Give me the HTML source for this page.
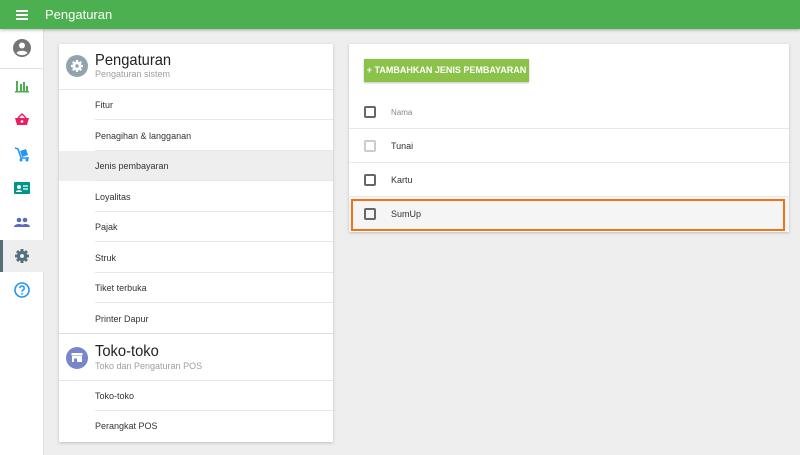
<!DOCTYPE html>
<html><head><meta charset="utf-8"><style>
*{box-sizing:border-box;margin:0;padding:0}
body{width:800px;height:455px;overflow:hidden;background:#eeeeee;font-family:"Liberation Sans",sans-serif;position:relative;color:#333}
.top{position:absolute;left:0;top:0;width:800px;height:29px;background:#4caf50;color:#fff;box-shadow:0 1px 3px rgba(0,0,0,.3);z-index:2}
.top .t{position:absolute;left:45px;top:7px;font-size:13px}
.top .m{position:absolute;left:16px;top:10px;width:12px;height:2px;background:#fff;box-shadow:0 4px 0 #fff,0 8px 0 #fff}
.side{position:absolute;left:0;top:29px;width:44px;height:426px;background:#fff;border-right:1px solid #e0e0e0}
.ic{position:absolute;left:12px;width:20px;height:20px}
.card{position:absolute;background:#fff;box-shadow:0 1px 3px rgba(0,0,0,.2)}
.it{position:absolute;left:36px;right:0;height:30px;font-size:9px;line-height:30px;border-bottom:1px solid #e8e8e8;color:#333}
.row{position:absolute;left:0;right:0;height:34px;border-bottom:1px solid #e8e8e8;font-size:9px;line-height:35px}
.cb{position:absolute;left:15px;top:11px;width:12px;height:12px;border:2px solid #666;border-radius:2px}
.row .l{position:absolute;left:42px;top:0}
.h{position:absolute;left:36px;font-size:16px;color:#222;transform:scaleX(.92);transform-origin:left}
.s{position:absolute;left:36px;font-size:9px;color:#9e9e9e}
</style></head><body>
<div class="top"><div class="m"></div><div class="t">Pengaturan</div></div>
<div class="side">
 <div style="position:absolute;left:0;top:39px;width:44px;height:1px;background:#e0e0e0"></div>
 <svg class="ic" style="top:9px" viewBox="0 0 20 20"><circle cx="10" cy="10" r="9" fill="#757575"/><circle cx="10" cy="7.5" r="3" fill="#fff"/><path d="M4.5 15c1.5-3 9.5-3 11 0a8 8 0 0 1-11 0z" fill="#fff"/></svg>
 <svg class="ic" style="top:47px" viewBox="0 0 20 20"><path d="M4 5h2v10H4zM8 8h2v7H8zM11 6h2v9h-2zM14 10h2v5h-2zM3 15h14v1.5H3z" fill="#4caf50"/></svg>
 <svg class="ic" style="top:81px" viewBox="0 0 20 20"><path d="M3 8h14l-2 7H5z" fill="#e91e63"/><path d="M6 8l4-4 4 4" stroke="#e91e63" stroke-width="1.5" fill="none"/><circle cx="10" cy="11.5" r="1.3" fill="#fff"/></svg>
 <svg class="ic" style="top:115px" viewBox="0 0 20 20"><path d="M3 4l3 1 3 9h8" stroke="#2196f3" stroke-width="1.5" fill="none"/><path d="M8 7l6-2 2 6-6 2z" fill="#2196f3"/><circle cx="9" cy="16" r="1.5" fill="#2196f3"/><circle cx="15" cy="16" r="1.5" fill="#2196f3"/></svg>
 <svg class="ic" style="top:149px" viewBox="0 0 20 20"><rect x="2" y="4" width="16" height="12" rx="1" fill="#009688"/><circle cx="7" cy="9" r="2" fill="#fff"/><path d="M4 14c0-2.5 6-2.5 6 0z" fill="#fff"/><path d="M11 8h5M11 11h5" stroke="#fff" stroke-width="1.2"/></svg>
 <svg class="ic" style="top:183px" viewBox="0 0 20 20"><circle cx="7" cy="8" r="2.3" fill="#5c6bc0"/><circle cx="13" cy="8" r="2.3" fill="#5c6bc0"/><path d="M2 15c0-4 10-4 10 0zM9 15c0-4 9-4 9 0z" fill="#5c6bc0"/></svg>
 <div style="position:absolute;left:0;top:211px;width:44px;height:32px;background:#eeeeee;border-left:3px solid #546e7a"></div>
 <svg class="ic" style="top:217px" viewBox="0 0 20 20"><g fill="#546e7a"><rect x="8.5" y="3" width="3" height="14" rx=".5"/><rect x="8.5" y="3" width="3" height="14" rx=".5" transform="rotate(45 10 10)"/><rect x="8.5" y="3" width="3" height="14" rx=".5" transform="rotate(90 10 10)"/><rect x="8.5" y="3" width="3" height="14" rx=".5" transform="rotate(135 10 10)"/><circle cx="10" cy="10" r="5"/></g><circle cx="10" cy="10" r="2" fill="#eee"/></svg>
 <svg class="ic" style="top:251px" viewBox="0 0 20 20"><circle cx="10" cy="10" r="7" fill="none" stroke="#2196f3" stroke-width="1.6"/><path d="M7.8 8.2a2.2 2.2 0 1 1 3 2c-.8.4-.8.8-.8 1.6" stroke="#2196f3" stroke-width="1.5" fill="none"/><circle cx="10" cy="13.8" r=".9" fill="#2196f3"/></svg>
</div>

<div class="card" style="left:59px;top:44px;width:274px;height:398px">
 <svg style="position:absolute;left:7px;top:11px" width="22" height="22" viewBox="0 0 22 22"><circle cx="11" cy="11" r="11" fill="#90a4ae"/><g fill="#fff"><rect x="9.8" y="5" width="2.4" height="12" rx=".4"/><rect x="9.8" y="5" width="2.4" height="12" rx=".4" transform="rotate(45 11 11)"/><rect x="9.8" y="5" width="2.4" height="12" rx=".4" transform="rotate(90 11 11)"/><rect x="9.8" y="5" width="2.4" height="12" rx=".4" transform="rotate(135 11 11)"/><circle cx="11" cy="11" r="4.3"/></g><circle cx="11" cy="11" r="1.7" fill="#90a4ae"/></svg>
 <div class="h" style="top:8px">Pengaturan</div>
 <div class="s" style="top:25px">Pengaturan sistem</div>
 <div style="position:absolute;left:0;right:0;top:45px;height:1px;background:#e8e8e8"></div>
 <div class="it" style="top:46px">Fitur</div>
 <div class="it" style="top:77px">Penagihan &amp; langganan</div>
 <div style="position:absolute;left:0;right:0;top:107px;height:30px;background:#eeeeee"></div>
 <div class="it" style="top:107px">Jenis pembayaran</div>
 <div class="it" style="top:138px">Loyalitas</div>
 <div class="it" style="top:168px">Pajak</div>
 <div class="it" style="top:199px">Struk</div>
 <div class="it" style="top:229px">Tiket terbuka</div>
 <div class="it" style="top:260px;left:0;padding-left:36px;border-bottom:1px solid #ddd">Printer Dapur</div>
 <svg style="position:absolute;left:7px;top:303px" width="22" height="22" viewBox="0 0 22 22"><circle cx="11" cy="11" r="11" fill="#7986cb"/><rect x="5.5" y="6" width="11" height="2.5" fill="#fff"/><rect x="6" y="9" width="10" height="6" fill="#fff"/><rect x="8" y="11.5" width="3" height="3.5" fill="#7986cb"/></svg>
 <div class="h" style="top:299px">Toko-toko</div>
 <div class="s" style="top:317px">Toko dan Pengaturan POS</div>
 <div style="position:absolute;left:0;right:0;top:336px;height:1px;background:#e8e8e8"></div>
 <div class="it" style="top:337px">Toko-toko</div>
 <div class="it" style="top:367px;border-bottom:none">Perangkat POS</div>
</div>

<div class="card" style="left:349px;top:44px;width:440px;height:188px">
 <div style="position:absolute;left:15px;top:15px;width:165px;height:23px;background:#8bc34a;color:#fff;font-size:9px;font-weight:bold;line-height:23px;text-align:center;white-space:nowrap;box-shadow:0 1px 2px rgba(0,0,0,.25)">+ TAMBAHKAN JENIS PEMBAYARAN</div>
 <div class="row" style="top:51px"><div class="cb"></div><span class="l" style="color:#888;font-size:8px">Nama</span></div>
 <div class="row" style="top:85px"><div class="cb" style="border-color:#ccc"></div><span class="l">Tunai</span></div>
 <div class="row" style="top:119px"><div class="cb"></div><span class="l">Kartu</span></div>
 <div class="row" style="top:153px;background:#f5f5f5;border:none"><div class="cb"></div><span class="l">SumUp</span></div>
</div>
<div style="position:absolute;left:351px;top:199px;width:434px;height:32px;border:2.5px solid #f47216"></div>
</body></html>
